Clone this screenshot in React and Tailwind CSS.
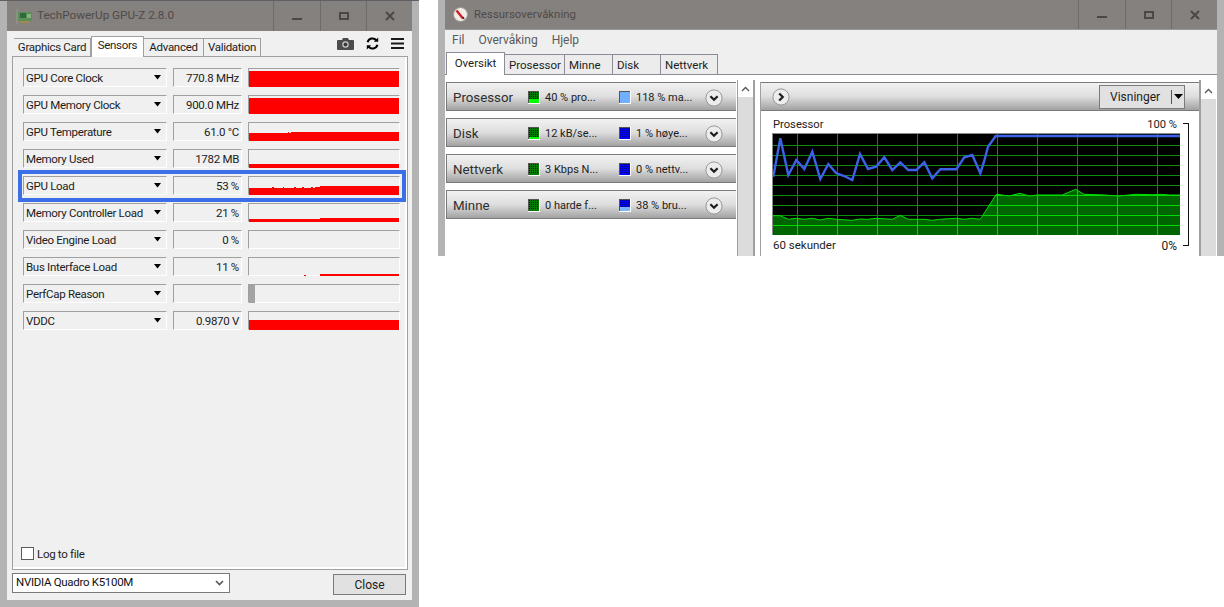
import React from "react";

const FONT = "font-['Roboto','Liberation_Sans',sans-serif]";

const rows = [
  { name: "GPU Core Clock", value: "770.8 MHz", bars: [[1, 3, 150, 16]] },
  { name: "GPU Memory Clock", value: "900.0 MHz", bars: [[1, 3, 150, 16]] },
  { name: "GPU Temperature", value: "61.0 °C", bars: [[1, 11, 150, 8], [43, 10, 108, 1], [40, 10, 1, 1]] },
  { name: "Memory Used", value: "1782 MB", bars: [[1, 15, 150, 4]] },
  { name: "GPU Load", value: "53 %", highlight: true, bars: [[1, 12, 71, 7], [24, 11, 2, 1], [35, 11, 1, 1], [46, 11, 2, 1], [54, 11, 2, 1], [63, 11, 2, 1], [67, 11, 5, 1], [72, 10, 79, 9]] },
  { name: "Memory Controller Load", value: "21 %", bars: [[1, 16, 71, 3], [72, 15, 79, 4]] },
  { name: "Video Engine Load", value: "0 %", bars: [] },
  { name: "Bus Interface Load", value: "11 %", bars: [[56, 18, 2, 1], [72, 17, 79, 2]] },
  { name: "PerfCap Reason", value: "", bars: [], gray: true },
  { name: "VDDC", value: "0.9870 V", bars: [[1, 9, 150, 10]] },
];

function Sunken({ className, children }) {
  return (
    <div className={"h-[19px] border-t border-l border-t-[#a0a0a0] border-l-[#a0a0a0] border-r border-b border-r-white border-b-white flex items-center " + className}>
      {children}
    </div>
  );
}

function Row({ row }) {
  return (
    <div className="relative flex gap-[6px] h-[19px] w-[377px]">
      <Sunken className="w-[144px] pl-[2px] pr-[4px] justify-between whitespace-nowrap">
        <span className="pt-[2px]">{row.name}</span>
        <svg width="9" height="5" viewBox="0 0 9 5"><path d="M1 0h7L4.5 4.5z" fill="#000" /></svg>
      </Sunken>
      <Sunken className="w-[69px] justify-end pr-[2px]"><span className="pt-[2px]">{row.value}</span></Sunken>
      <Sunken className="w-[152px] items-stretch">
        <svg width="150" height="18" viewBox="0 1 150 18" className="block">
          {row.gray && <rect x="0" y="1" width="6" height="18" fill="#a3a3a3" />}
          {row.bars.map((b, i) => (
            <rect key={i} x={b[0] - 1} y={b[1]} width={b[2]} height={b[3]} fill="#ff0000" />
          ))}
        </svg>
      </Sunken>
      {row.highlight && (
        <div className="absolute left-[-5px] right-[-6px] top-[-6px] bottom-[-7px] border-4 border-[#3a6fe8]" />
      )}
    </div>
  );
}

function WinControls({ color = "#4a4846" }) {
  return (
    <div className="flex h-full ml-auto">
      <div className="w-[47px] h-full border-l border-[#6f6c6a] flex items-center justify-center">
        <div className="w-[10px] h-[2px] mt-[5px] bg-[#4a4846]" />
      </div>
      <div className="w-[46px] h-full border-l border-[#6f6c6a] flex items-center justify-center">
        <div className="w-[10px] h-[8px] border-2 border-[#4a4846]" />
      </div>
      <div className="w-[46px] h-full border-l border-[#6f6c6a] flex items-center justify-center">
        <svg width="10" height="10" viewBox="0 0 10 10"><path d="M1 1l8 8M9 1l-8 8" stroke={color} strokeWidth="2" /></svg>
      </div>
    </div>
  );
}

function GpuIcon() {
  return (
    <svg width="17" height="15" viewBox="0 0 17 15" className="mr-[3px]">
      <path d="M1 0v15" stroke="#8fa08f" strokeWidth="1" />
      <rect x="2" y="3" width="14" height="9" fill="#5c8f58" />
      <rect x="4" y="4" width="6" height="5" fill="#2f6b3a" />
      <rect x="11" y="5" width="4" height="4" fill="#86b07c" />
      <rect x="4" y="12" width="9" height="2" fill="#a08a50" />
    </svg>
  );
}

function GpuZ() {
  const Tab = ({ w, active, children }) => (
    <div
      className={
        active
          ? `${w} h-[21px] -mb-px relative z-10 bg-white border border-b-0 border-[#a0a0a0] flex items-center justify-center pb-[3px]`
          : `${w} h-[18px] bg-[#f0f0f0] border border-b-0 border-l-0 border-[#a0a0a0] flex items-center justify-center`
      }
    >
      {children}
    </div>
  );
  return (
    <div className={`w-[419px] h-[607px] shrink-0 bg-[#b3b3b3] border-t border-[#5e6064] px-[7px] text-[11.5px] tracking-[-0.3px] leading-none text-[#1c1c1c] ${FONT}`}>
      <div className="h-[30px] bg-[#85817e] flex items-center pl-[9px] text-[#4f4b48] text-[11.7px] tracking-normal">
        <GpuIcon />
        <span className="ml-[1px]">TechPowerUp GPU-Z 2.8.0</span>
        <WinControls />
      </div>
      <div className="h-[569px] bg-[#f0f0f0] flex flex-col">
        <div className="flex items-end h-[20px] mt-[5px] pl-[7px] relative">
          <Tab w="w-[77px] border-l">Graphics Card</Tab>
          <Tab w="w-[53px]" active>Sensors</Tab>
          <Tab w="w-[60px]">Advanced</Tab>
          <Tab w="w-[57px]">Validation</Tab>
          <div className="ml-auto mr-[8px] flex items-center gap-[12px] h-[20px] pb-[5px]">
            <svg width="17" height="12" viewBox="0 0 17 12">
              <path d="M1 2h4l1-2h5l1 2h4a1 1 0 0 1 1 1v8a1 1 0 0 1-1 1H1a1 1 0 0 1-1-1V3a1 1 0 0 1 1-1z" fill="#4c4c4c" />
              <circle cx="8.5" cy="6.5" r="3.2" fill="#cfcfcf" />
              <circle cx="8.5" cy="6.5" r="2" fill="#3a3a3a" />
            </svg>
            <svg width="13" height="13" viewBox="0 0 13 13" fill="none" stroke="#000" strokeWidth="2">
              <path d="M1.6 5.2A5 5 0 0 1 10.4 3.4" />
              <path d="M11.4 7.8A5 5 0 0 1 2.6 9.6" />
              <path d="M12.2 0.4v4.4H7.8z" fill="#000" stroke="none" />
              <path d="M0.8 12.6V8.2h4.4z" fill="#000" stroke="none" />
            </svg>
            <svg width="13" height="11" viewBox="0 0 13 11"><path d="M0 1h13M0 5.5h13M0 10h13" stroke="#1a1a1a" strokeWidth="2" /></svg>
          </div>
        </div>
        <div className="ml-[5px] w-[396px] h-[514px] border border-[#a0a0a0] shadow-[inset_-2px_-2px_0_#fff] pl-[10px] pt-[11px] flex flex-col">
          <div className="flex flex-col gap-[8px]">
            {rows.map((r) => <Row key={r.name} row={r} />)}
          </div>
          <label className="mt-auto mb-[9px] flex items-center gap-[3px] -ml-[2px]">
            <span className="w-[13px] h-[13px] border border-[#5c5c5c] bg-white" />
            <span className="pt-[2px]">Log to file</span>
          </label>
        </div>
        <div className="ml-[5px] w-[394px] mt-[3px] flex justify-between">
          <div className="w-[218px] h-[20px] bg-white border border-[#7a7a7a] flex items-center justify-between pl-[3px] pr-[5px]">
            <span className="text-[#111]">NVIDIA Quadro K5100M</span>
            <svg width="9" height="6" viewBox="0 0 9 6" fill="none"><path d="M1 1l3.5 3.5L8 1" stroke="#555" strokeWidth="1.6" /></svg>
          </div>
          <div className="w-[73px] h-[21px] mt-[1px] bg-[#e1e1e1] border border-[#7a7a7a] flex items-center justify-center text-[12px] tracking-normal">Close</div>
        </div>
      </div>
    </div>
  );
}

function Meter({ color, dot, fill, split = 0 }) {
  return (
    <svg width="12" height="13" viewBox="0 0 12 13" className="shrink-0">
      <rect width="12" height="13" fill="#fff" />
      <rect width="11" height="12" fill="#555" />
      <rect x="1" y="1" width="10" height="11" fill={color} />
      {Array.from({ length: 5 }).map((_, r) =>
        Array.from({ length: 5 }).map((_, c) => (
          <rect key={`${r}-${c}`} x={1 + c * 2} y={1 + r * 2} width="1" height="1" fill={dot} />
        ))
      )}
      {split > 0 && <rect x="1" y={12 - split} width="10" height={split} fill={fill} />}
    </svg>
  );
}

function Circle({ dir }) {
  return (
    <svg width="18" height="18" viewBox="0 0 20 20" className="shrink-0 mx-px">
      <circle cx="10" cy="10" r="9" fill="#ececec" stroke="#8e8e8e" />
      <path d={dir === "down" ? "M6 8l4 4 4-4" : "M8 6l4 4-4 4"} fill="none" stroke="#1d1d1d" strokeWidth="2.4" />
    </svg>
  );
}

const G = ["#007c00", "#001f00"];
const B = ["#0000ff", "#0000a0"];
const resources = [
  { name: "Prosessor", a: "40 % pro...", b: "118 % ma...", m1: [...G, "#00ff00", 4], m2: ["#70b0ff", "#70b0ff", "#70b0ff", 0] },
  { name: "Disk", a: "12 kB/se...", b: "1 % høye...", m1: [...G, "#00ff00", 2], m2: [...B, "#0000ff", 0] },
  { name: "Nettverk", a: "3 Kbps N...", b: "0 % nettv...", m1: [...G, "#006400", 0], m2: [...B, "#0000ff", 0] },
  { name: "Minne", a: "0 harde f...", b: "38 % bru...", m1: [...G, "#006400", 0], m2: [...B, "#78b4ff", 4] },
];

const header = "bg-gradient-to-b from-[#f2f2f2] via-[#dedede] to-[#a2a2a2]";

function Accordion({ r }) {
  return (
    <div className={`h-[29px] w-[290px] border border-r-0 border-[#7a7a7a] ${header} flex items-center pl-[6px] pt-[2px]`}>
      <span className="w-[75px] text-[13.3px] text-[#2e2e2e]">{r.name}</span>
      <Meter color={r.m1[0]} dot={r.m1[1]} fill={r.m1[2]} split={r.m1[3]} />
      <span className="w-[79px] pl-[5px]">{r.a}</span>
      <Meter color={r.m2[0]} dot={r.m2[1]} fill={r.m2[2]} split={r.m2[3]} />
      <span className="w-[73px] pl-[5px]">{r.b}</span>
      <Circle dir="down" />
    </div>
  );
}

function Scrollbar() {
  return (
    <div className="w-[15px] h-full bg-[#dcdcdc] flex flex-col">
      <div className="h-[17px] bg-white flex items-center justify-center">
        <svg width="9" height="6" viewBox="0 0 9 6" fill="none"><path d="M1 5l3.5-3.5L8 5" stroke="#555" strokeWidth="1.3" /></svg>
      </div>
    </div>
  );
}

const blue = "1.3,42.7 8.3,4.3 16.3,41 24.3,26 32.3,35 40.3,17.7 48.3,45 56.3,30 64.3,39.3 72.3,42 80.3,46 88,20 96,35 104,32.7 112.3,23.3 120.3,36 128.3,28.3 136.3,36 144.3,36 152.3,28.3 160.3,44.3 168.3,35.3 184.3,35.3 192.3,23.3 200.3,21 208.3,39.3 212,27.7 216,12.7 223.7,2 408,2";
const green = "0,81.7 8.3,81.7 16.3,85.3 24.3,84.3 32.3,85.3 40.3,84.3 48.3,86 56.3,84.3 64.3,85.3 80.3,86.3 88,85 96,85.3 104,84.3 120.3,85.3 128.3,81.3 136.3,85.3 152.3,85.3 160.3,86.3 168.3,85.3 184.3,84.3 192.3,85.3 200.3,84.3 208.3,85.3 224.3,60.3 237,62 248,59.3 257,62 265.3,61 290.3,61 303.7,55.3 312,60.3 332,61 347,62 363.7,60.3 380.3,60.7 388.7,60.3 397,61 408,61";
const vLines = [25.5, 65.5, 105.5, 145.5, 185.5, 225.5, 265.5, 305.5, 345.5, 385.5];
const hLines = [11.5, 21.5, 31.5, 41.5, 51.5, 61.5, 71.5, 81.5, 91.5];

function Chart() {
  const grid = (stroke) => (
    <g stroke={stroke} strokeWidth="1">
      {vLines.map((x) => <path key={x} d={`M${x} 0V101`} />)}
      {hLines.map((y) => <path key={y} d={`M0 ${y}H408`} />)}
    </g>
  );
  return (
    <svg width="408" height="102" viewBox="0 -1 408 102" className="block">
      <rect x="0" y="-1" width="408" height="102" fill="#000" />
      {grid("#0d8c0d")}
      <defs>
        <clipPath id="area"><polygon points={`${green} 408,101 0,101`} /></clipPath>
      </defs>
      <polygon points={`${green} 408,101 0,101`} fill="#006400" />
      <g clipPath="url(#area)">{grid("#00dc00")}</g>
      <polyline points={green} fill="none" stroke="#00e000" strokeWidth="1" />
      <polyline points={blue} fill="none" stroke="#3b62e8" strokeWidth="2.4" />
      <path d="M0.5 -1V101M0 -0.5H408" stroke="#8a8a8a" fill="none" />
    </svg>
  );
}

function Resmon() {
  const tabs = [["w-[60px]", "Prosessor"], ["w-[48px]", "Minne"], ["w-[48px]", "Disk"], ["w-[57px]", "Nettverk"]];
  return (
    <div className={`w-[786px] h-[256px] shrink-0 ml-[19px] bg-[#b3b3b3] pl-[7px] pr-[7px] text-[11px] leading-none text-[#1c1c1c] ${FONT}`}>
      <div className="h-[30px] bg-[#85817e] border-b border-[#9a9795] flex items-center pl-[8px] text-[#4f4b48] text-[11.4px]">
        <svg width="15" height="15" viewBox="0 0 15 15" className="mr-[6px]">
          <circle cx="7.5" cy="7.5" r="7" fill="#f1ece6" stroke="#9c9690" />
          <path d="M3.5 3.5l6.5 8" stroke="#c8202a" strokeWidth="2.4" />
          <path d="M10 11.5l1-1" stroke="#222" strokeWidth="2" />
        </svg>
        <span>Ressursovervåkning</span>
        <WinControls />
      </div>
      <div className="h-[226px] bg-white flex flex-col">
        <div className="h-[44px] bg-[#efefef] relative">
          <div className="flex gap-[14px] pl-[7px] pb-[2px] text-[#5a5a5a] text-[12px] h-[22px] items-center">
            <span>Fil</span><span>Overvåking</span><span>Hjelp</span>
          </div>
          <div className="flex items-end h-[22px] pl-[1px]">
            <div className="w-[59px] h-[23px] -mb-[1px] relative z-10 bg-white border border-b-0 border-[#8c8c96] flex items-center justify-center pb-[1px] text-[11.5px]">Oversikt</div>
            {tabs.map(([w, t]) => (
              <div key={t} className={`${w} h-[20px] bg-[#ececec] border border-b-0 border-l-0 border-[#8c8c96] flex items-center pl-[4px] pt-[2px] text-[11.5px]`}>{t}</div>
            ))}
          </div>
        </div>
        <div className="flex-1 border-t border-[#8c8c96] pt-[7px] flex min-h-0 overflow-hidden">
          <div className="w-[292px] pl-[1px] flex flex-col gap-[7px] shrink-0">
            {resources.map((r) => <Accordion key={r.name} r={r} />)}
          </div>
          <div className="border-l border-[#a0a0a0] -mt-[2px] shrink-0"><Scrollbar /></div>
          <div className="w-[2px] bg-[#a0a0a0] -mt-[2px] shrink-0" />
          <div className="w-[5px] shrink-0" />
          <div className="w-[439px] shrink-0 border-l border-[#a0a0a0] flex flex-col">
            <div className={`h-[29px] border-t border-b border-[#7a7a7a] ${header} flex items-center pl-[10px] pr-[14px] justify-between`}>
              <Circle dir="right" />
              <div className="w-[86px] h-[24px] bg-[#e1e1e1] border border-[#7a7a7a] flex items-center pl-[10px] text-[12px]">
                <span className="w-[61px]">Visninger</span>
                <span className="w-[1px] h-[14px] bg-[#555]" />
                <svg width="9" height="5" viewBox="0 0 9 5" className="ml-[2px]"><path d="M0 0h9L4.5 5z" fill="#000" /></svg>
              </div>
            </div>
            <div className="relative flex-1 pl-[11px] pt-[8px]">
              <div className="flex justify-between w-[407px] pl-px pr-[2px] h-[14px] text-[11.2px]">
                <span>Prosessor</span><span>100 %</span>
              </div>
              <Chart />
              <div className="flex justify-between w-[407px] pl-px pr-[2px] mt-[5px] text-[11.5px]">
                <span>60 sekunder</span><span className="text-[12px]">0%</span>
              </div>
              <div className="absolute left-[422px] top-[12px] w-[6px] h-[123px] border-t border-r border-b border-[#111]" />
            </div>
          </div>
          <div className="w-[2px] bg-[#a0a0a0] -mt-[2px] shrink-0" />
          <div className="shrink-0 flex-1"><Scrollbar /></div>
        </div>
      </div>
    </div>
  );
}

export default function App() {
  return (
    <div className="w-[1224px] h-[607px] bg-white flex items-start overflow-hidden">
      <GpuZ />
      <Resmon />
    </div>
  );
}
